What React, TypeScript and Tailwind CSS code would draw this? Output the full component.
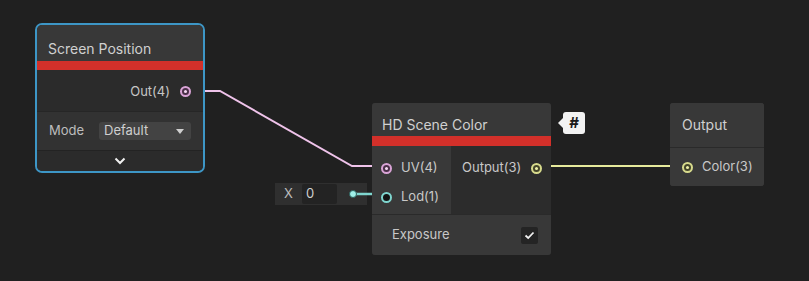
import React from "react";

const Port = ({ ring, dot, gap }: { ring: string; dot: string; gap: string }) => (
  <span
    className="flex items-center justify-center w-[11px] h-[11px] rounded-full border-2 shrink-0"
    style={{ borderColor: ring, background: gap }}
  >
    <span className="block w-[3px] h-[3px] rounded-full" style={{ background: dot }} />
  </span>
);

export default function App() {
  return (
    <div
      className="relative w-[809px] h-[281px] overflow-hidden bg-[#202020] text-[13px] text-[#c8c8c8]"
      style={{ fontFamily: "Inter, 'Noto Sans', sans-serif" }}
    >
      {/* X input */}
      <div className="absolute left-[275px] top-[183px] w-[92px] h-[22px] bg-[#2f2f2f] flex items-center">
        <span className="w-[27px] text-center text-[#bdbdbd]">X</span>
        <div className="w-[35px] h-[20px] bg-[#232323] rounded-[2px] flex items-center pl-[4px] text-[#cfcfcf]">0</div>
      </div>

      {/* wires */}
      <svg className="absolute left-0 top-0" width="809" height="281">
        <path d="M190 91 H220 L352 166 H382" fill="none" stroke="#efc3ea" strokeWidth="2" />
        <path d="M540 166 H684" fill="none" stroke="#e6ea9c" strokeWidth="2" />
        <path d="M354 194 H382" fill="none" stroke="#7fd6cf" strokeWidth="2.5" />
        <circle cx="353" cy="194" r="3.5" fill="#9ff0e8" stroke="#2a5e5a" strokeWidth="1" />
      </svg>

      {/* Screen Position */}
      <div className="absolute left-[35px] top-[23px] w-[170px] rounded-[7px] border-2 border-[#3d96c6] overflow-hidden bg-[#2b2b2b]">
        <div className="h-[36px] bg-[#383838] pl-[11px] pt-[16px] leading-[16px] text-[14px] text-[#d0d0d0]">
          Screen Position
        </div>
        <div className="h-[9px] bg-[#d3302a]" />
        <div className="h-[41px] bg-[#2b2b2b] flex items-center justify-end pr-[12px] gap-[10px] pt-[2px]">
          <span className="text-[#c6c6c6]">Out(4)</span>
          <Port ring="#d9a3d6" dot="#f5d8f2" gap="#4a2f48" />
        </div>
        <div className="h-[39px] bg-[#323232] flex items-center pl-[12px] border-t border-[#262626]">
          <span className="w-[50px] text-[#bdbdbd]">Mode</span>
          <div className="w-[92px] h-[18px] rounded-[3px] bg-[#434343] flex items-center justify-between pl-[5px] pr-[7px] text-[#cfcfcf]">
            <span>Default</span>
            <span className="w-0 h-0 border-l-[4px] border-r-[4px] border-t-[5px] border-l-transparent border-r-transparent border-t-[#cfcfcf]" />
          </div>
        </div>
        <div className="h-[21px] bg-[#2b2b2b] border-t border-[#232323] flex items-center justify-center">
          <svg width="12" height="8" viewBox="0 0 12 8">
            <path d="M1.5 1.5 L6 6 L10.5 1.5" fill="none" stroke="#f0f0f0" strokeWidth="2" />
          </svg>
        </div>
      </div>

      {/* HD Scene Color */}
      <div className="absolute left-[372px] top-[103px] w-[179px] bg-[#2c2c2c] rounded-[3px] overflow-hidden">
        <div className="h-[33px] bg-[#383838] pl-[10px] pt-[14px] leading-[16px] text-[14px] text-[#d0d0d0]">HD Scene Color</div>
        <div className="h-[10px] bg-[#d3302a]" />
        <div className="flex h-[68px]">
          <div className="w-[79px] bg-[#393939] flex flex-col pt-[14px] pl-[9px] gap-[13px]">
            <div className="flex items-center gap-[9px] h-[16px]">
              <Port ring="#d9a3d6" dot="#f5d8f2" gap="#4a2f48" />
              <span>UV(4)</span>
            </div>
            <div className="flex items-center gap-[9px] h-[16px]">
              <Port ring="#7fd6cf" dot="#141414" gap="#141414" />
              <span>Lod(1)</span>
            </div>
          </div>
          <div className="flex-1 bg-[#2c2c2c] pt-[14px] pl-[11px]">
            <div className="flex items-center gap-[10px] h-[16px]">
              <span>Output(3)</span>
              <Port ring="#d7da8c" dot="#eef0a8" gap="#44452a" />
            </div>
          </div>
        </div>
        <div className="h-[41px] bg-[#383838] border-t border-[#2a2a2a] flex items-center justify-between pl-[20px] pr-[13px]">
          <span>Exposure</span>
          <div className="w-[17px] h-[17px] rounded-[2px] bg-[#242424] flex items-center justify-center">
            <svg width="11" height="9" viewBox="0 0 11 9">
              <path d="M1.5 4.5 L4.2 7 L9.5 1.5" fill="none" stroke="#f0f0f0" strokeWidth="1.8" />
            </svg>
          </div>
        </div>
      </div>

      {/* # badge */}
      <div className="absolute left-[558px] top-[112px] w-[27px] h-[22px] flex items-center">
        <span className="w-0 h-0 border-t-[5px] border-b-[5px] border-r-[5px] border-t-transparent border-b-transparent border-r-[#f2f2f2]" />
        <div className="w-[22px] h-[22px] bg-[#f2f2f2] rounded-[3px] flex items-center justify-center text-[#1a1a1a] font-bold text-[15px]">#</div>
      </div>

      {/* Output node */}
      <div className="absolute left-[670px] top-[103px] w-[94px] bg-[#393939] rounded-[3px] overflow-hidden">
        <div className="h-[44px] bg-[#383838] pl-[12px] pt-[14px] leading-[16px] text-[14px] text-[#d0d0d0]">Output</div>
        <div className="h-[39px] bg-[#393939] border-t border-[#2a2a2a] flex items-center pl-[12px] gap-[9px]">
          <Port ring="#d7da8c" dot="#eef0a8" gap="#44452a" />
          <span>Color(3)</span>
        </div>
      </div>
    </div>
  );
}
